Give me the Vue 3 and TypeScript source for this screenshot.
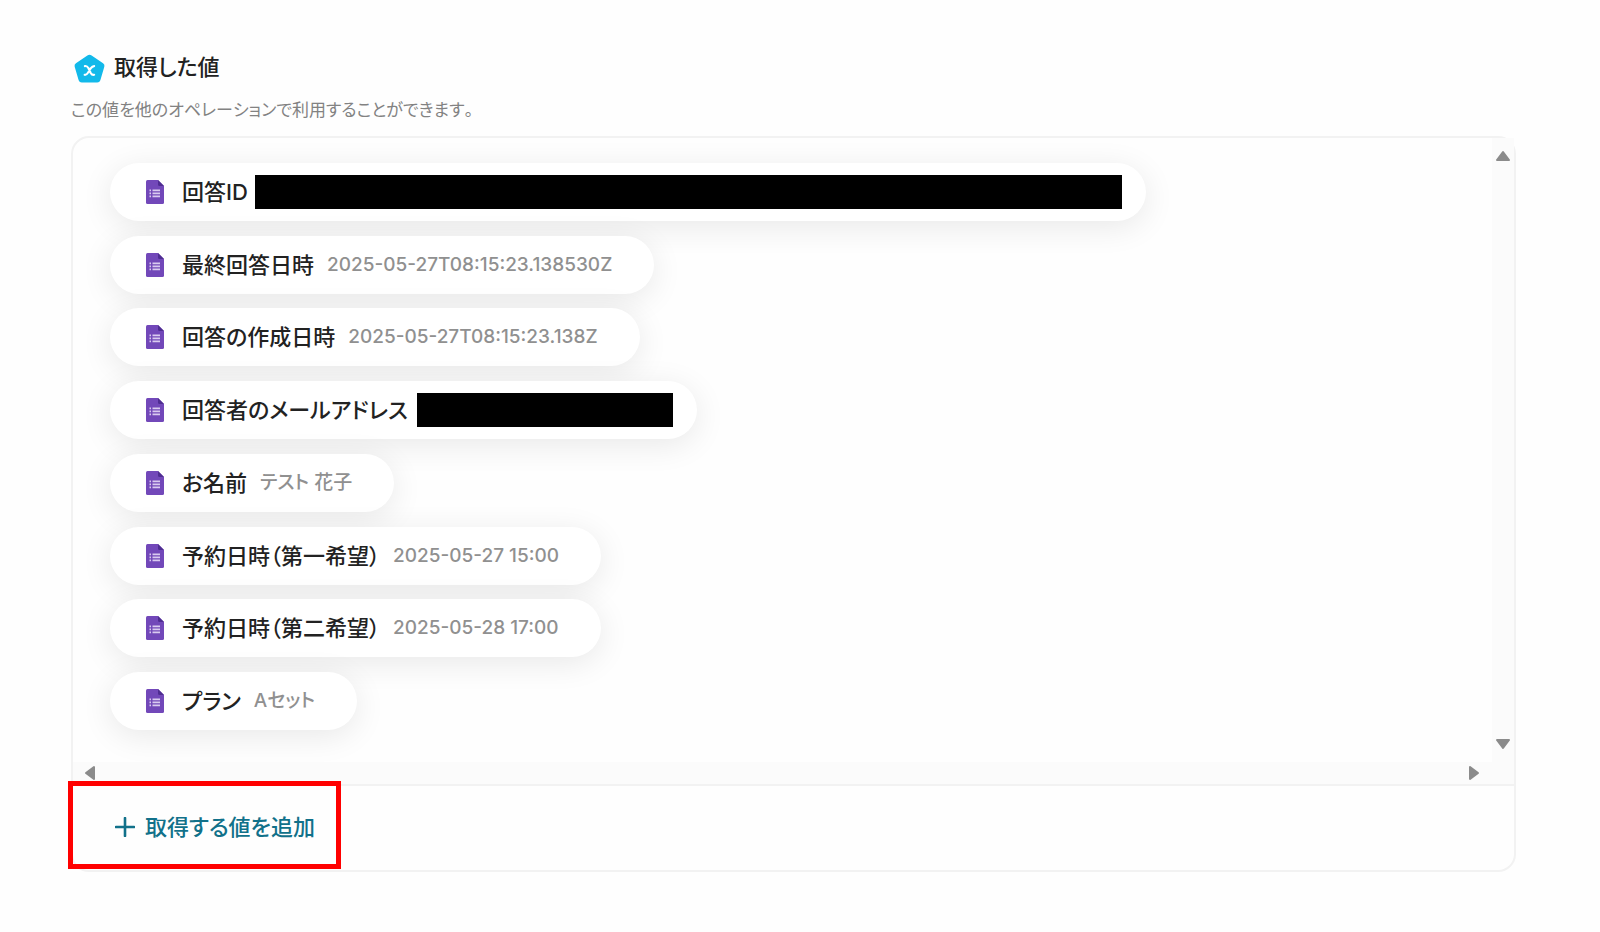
<script setup lang="ts">
interface Item {
  label: string
  value?: string
  hidden?: 'long' | 'short'
}

const items: Item[] = [
  { label: '回答ID', hidden: 'long' },
  { label: '最終回答日時', value: '2025-05-27T08:15:23.138530Z' },
  { label: '回答の作成日時', value: '2025-05-27T08:15:23.138Z' },
  { label: '回答者のメールアドレス', hidden: 'short' },
  { label: 'お名前', value: 'テスト 花子' },
  { label: '予約日時（第一希望）', value: '2025-05-27 15:00' },
  { label: '予約日時（第二希望）', value: '2025-05-28 17:00' },
  { label: 'プラン', value: 'Aセット' },
]
</script>

<template>
  <main class="page">
    <header class="head">
      <svg class="badge" viewBox="0 0 32 30" aria-hidden="true">
        <path d="M13.8 1Q16 -.4 18.2 1L30 9Q32 10.400 31.300 12.600L27.200 26.600Q26.400 29 24 29H8Q5.600 29 4.800 26.600L.7 12.600Q0 10.400 2 9Z" fill="#12b9ea" />
        <path d="M11.200 12C13.200 11.600 14 12.600 14.800 14L17.400 19.400C18.200 20.800 19 21.400 20.800 21M20.800 12C19 12 18.200 13 17.200 14.400L14.600 18.600C13.600 20.200 12.800 21.200 11 21" fill="none" stroke="#fff" stroke-width="2.200" stroke-linecap="round" />
      </svg>
      <h1 class="title">取得した値</h1>
    </header>
    <p class="desc">この値を他のオペレーションで利用することができます。</p>

    <section class="panel">
      <div class="viewport">
        <ul class="list">
          <li v-for="item in items" :key="item.label" class="pill" :class="{ tight: item.hidden }">
            <svg class="doc" viewBox="0 0 18 24" aria-hidden="true">
              <path d="M1.500 0H12L18 6V22.500Q18 24 16.500 24H1.500Q0 24 0 22.500V1.500Q0 0 1.500 0Z" fill="#7248b9" />
              <path d="M12 0L18 6H13.500Q12 6 12 4.500Z" fill="#4f2d91" />
              <path d="M3.500 9.500h1.500v1.700h-1.500zM3.500 12.500h1.500v1.700h-1.500zM3.500 15.500h1.500v1.700h-1.500zM6.500 9.500h7.500v1.700h-7.500zM6.500 12.500h7.500v1.700h-7.500zM6.500 15.500h7.500v1.700h-7.500z" fill="#d9caf0" />
            </svg>
            <span class="label">{{ item.label }}</span>
            <span v-if="item.value" class="value">{{ item.value }}</span>
            <span v-else class="mask" :class="item.hidden"></span>
          </li>
        </ul>
        <div class="vbar">
          <svg class="arrow" viewBox="0 0 16 12" aria-hidden="true"><path d="M8 2L14 10H2Z" /></svg>
          <svg class="arrow" viewBox="0 0 16 12" aria-hidden="true"><path d="M8 10L2 2H14Z" /></svg>
        </div>
        <div class="hbar">
          <svg class="arrow side" viewBox="0 0 12 16" aria-hidden="true"><path d="M2 8L10 2V14Z" /></svg>
          <svg class="arrow side" viewBox="0 0 12 16" aria-hidden="true"><path d="M10 8L2 14V2Z" /></svg>
        </div>
        <div class="corner"></div>
      </div>
      <footer class="foot">
        <button type="button" class="add">
          <svg class="plus" viewBox="0 0 20 20" aria-hidden="true"><path d="M10 1V19M1 10H19" /></svg>
          取得する値を追加
        </button>
        <div class="highlight"></div>
      </footer>
    </section>
  </main>
</template>

<style>
body {
  margin: 0;
  background: #fefefe;
}
</style>

<style scoped>
.page {
  box-sizing: border-box;
  padding: 49px 84px 60px 71px;
  color: #222;
  font-family: Inter, "Noto Sans CJK JP", sans-serif;
  font-feature-settings: "palt";
}
.head {
  display: flex;
  align-items: center;
  gap: 9px;
  height: 36px;
  padding-left: 3px;
}
.badge {
  width: 31px;
  height: 30px;
  margin-top: 3px;
}
.title {
  margin: 0;
  font-size: 22px;
  line-height: 34px;
  font-weight: 500;
}
.desc {
  margin: 11px 0 0;
  color: #828282;
  font-size: 17px;
  line-height: 28px;
  font-kerning: none;
}
.panel {
  margin-top: 12px;
  border: 2px solid #f2f2f2;
  border-radius: 18px;
}
.viewport {
  display: grid;
  grid-template-columns: 1fr 22px;
  grid-template-rows: 1fr 22px;
}
.list {
  display: flex;
  flex-direction: column;
  align-items: flex-start;
  justify-content: space-between;
  box-sizing: border-box;
  min-height: 624px;
  margin: 0;
  padding: 25px 37px 32px;
  list-style: none;
}
.pill {
  display: flex;
  align-items: center;
  box-sizing: border-box;
  height: 58px;
  padding: 0 42px 0 36px;
  border-radius: 30px;
  background: #fff;
  box-shadow: 0 6px 32px rgba(0, 0, 0, 0.09);
  white-space: nowrap;
}
.pill.tight {
  padding-right: 24px;
}
.doc {
  width: 18px;
  height: 24px;
  margin-right: 18px;
}
.label {
  font-size: 22px;
  line-height: 32px;
  font-weight: 500;
}
.value {
  margin-left: 13px;
  color: #909090;
  font-size: 19px;
  line-height: 32px;
  font-weight: 500;
}
.mask {
  height: 34px;
  background: #000;
}
.mask.long {
  width: 867px;
  margin-left: 7px;
}
.mask.short {
  width: 256px;
  margin-left: 9px;
}
.vbar,
.hbar,
.corner {
  background: #fbfbfb;
}
.vbar {
  display: flex;
  flex-direction: column;
  align-items: center;
  justify-content: space-between;
  padding: 12px 0;
}
.hbar {
  display: flex;
  align-items: center;
  justify-content: space-between;
  padding: 0 12px 0 11px;
}
.arrow {
  width: 16px;
  height: 12px;
  fill: #8b8b8b;
  stroke: #8b8b8b;
  stroke-width: 2;
  stroke-linejoin: round;
}
.arrow.side {
  width: 12px;
  height: 16px;
}
.foot {
  position: relative;
  padding: 21px 42px 23px;
  border-top: 2px solid #f2f2f2;
}
.add {
  display: flex;
  align-items: center;
  gap: 10px;
  padding: 0;
  border: 0;
  background: none;
  color: #11718a;
  font: inherit;
  font-feature-settings: inherit;
  font-size: 22px;
  line-height: 40px;
  font-weight: 500;
  cursor: pointer;
}
.plus {
  width: 20px;
  height: 20px;
  fill: none;
  stroke: currentColor;
  stroke-width: 2.600;
  stroke-linecap: round;
}
.highlight {
  position: absolute;
  top: -5px;
  left: -5px;
  box-sizing: border-box;
  width: 273px;
  height: 88px;
  border: 5px solid #f00;
  pointer-events: none;
}
</style>
